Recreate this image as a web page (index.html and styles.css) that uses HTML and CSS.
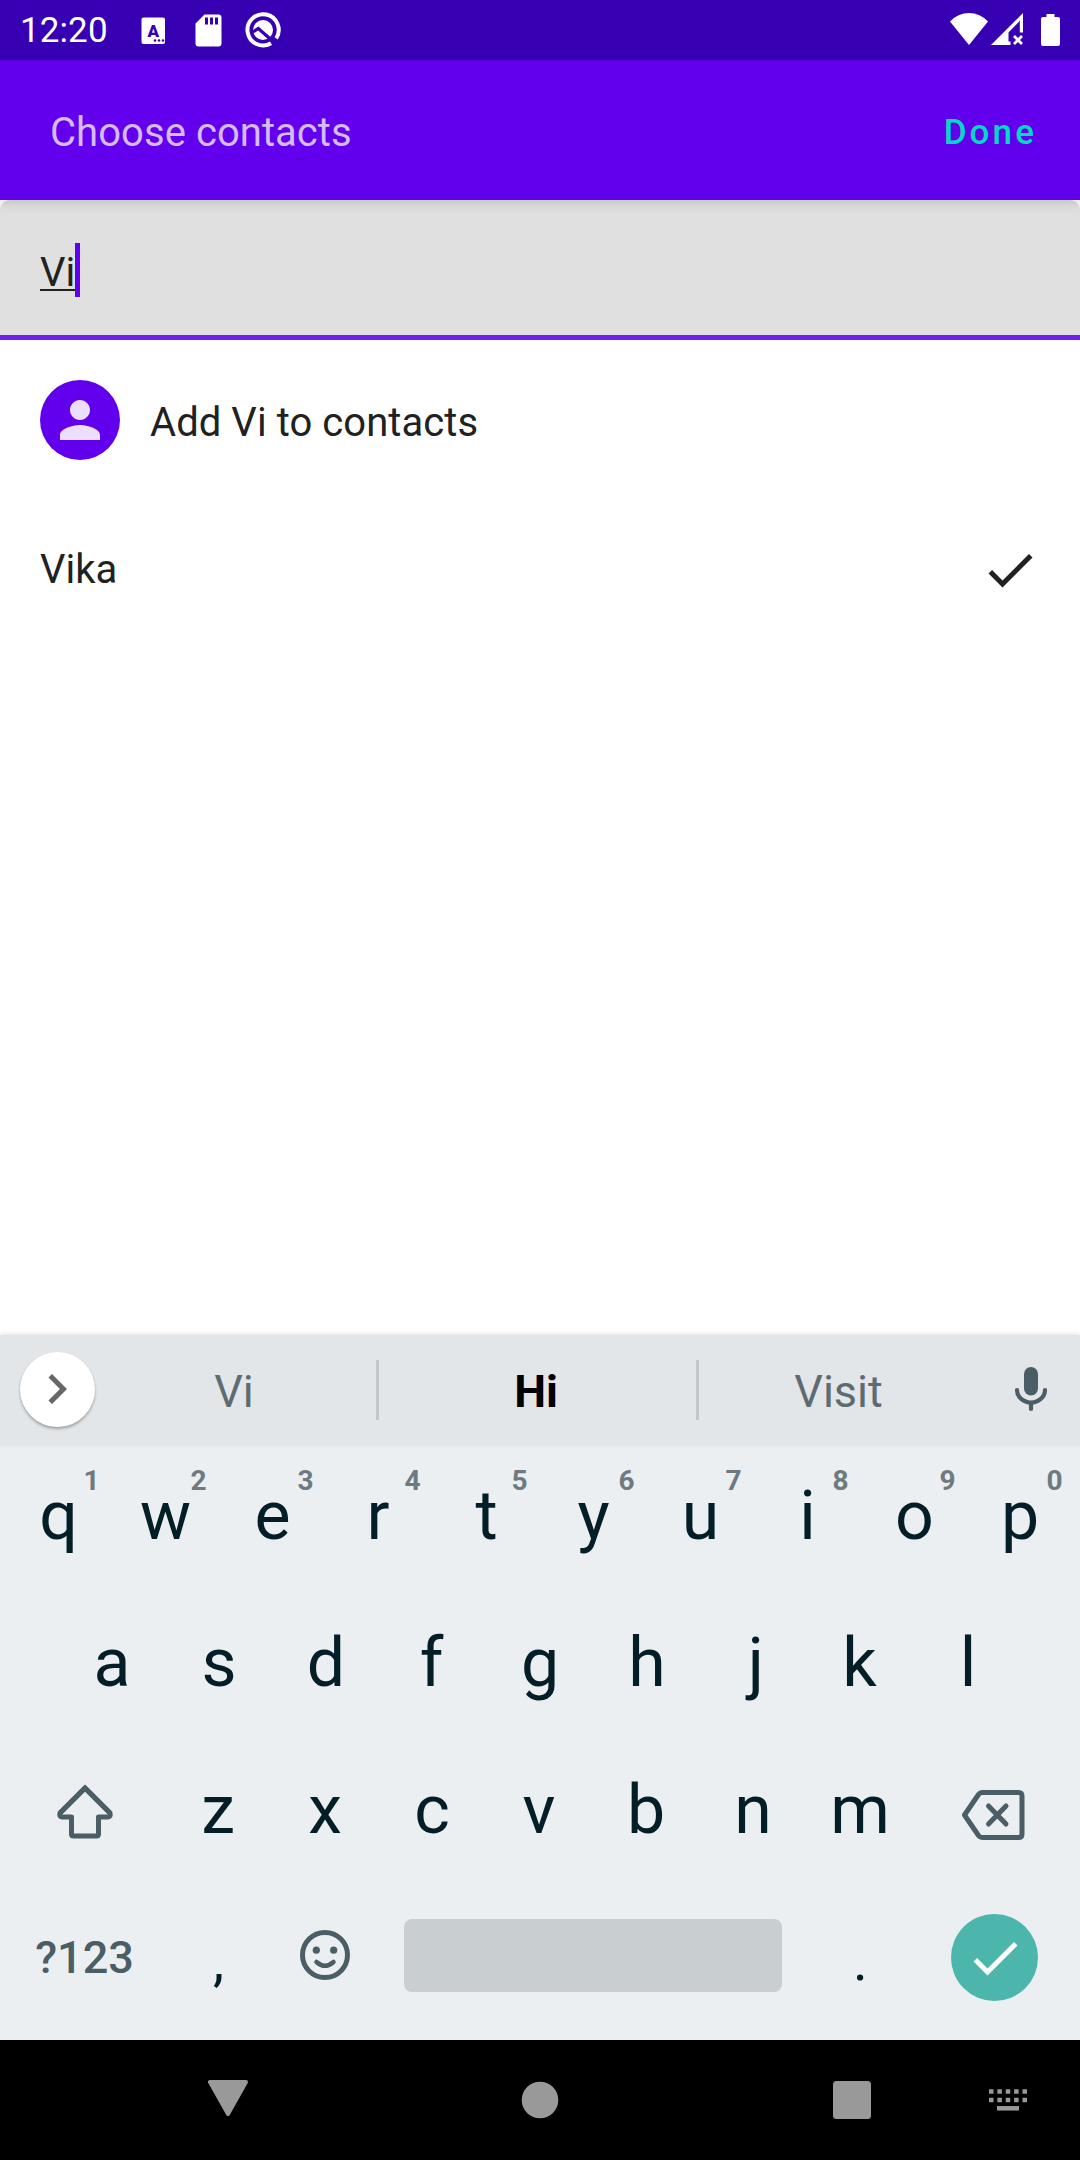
FILE: index.html
```html
<!DOCTYPE html>
<html lang="en">
<head>
<meta charset="utf-8">
<title>Choose contacts</title>
<link rel="stylesheet" href="styles.css">
</head>
<body>
<div class="screen">
  <div class="status">
    <span class="clock">12:20</span>
    <svg class="note-a" width="25" height="28" viewBox="0 0 25 28"><rect x=".5" y=".5" width="23.500" height="26.500" rx="2" fill="#fff"/><text x="12.300" y="19.500" text-anchor="middle" class="glyph-a">A</text><g fill="#3700b3"><circle cx="14" cy="23.500" r="1.300"/><circle cx="18" cy="23.500" r="1.300"/><circle cx="22" cy="23.500" r="1.300"/></g></svg>
    <svg class="note-sd" width="27" height="33" viewBox="0 0 27 33"><path d="M9.500.5H23.500a3 3 0 0 1 3 3V29.500a3 3 0 0 1-3 3H3.500a3 3 0 0 1-3-3V9.500z" fill="#fff"/><path d="M11.500 3.500v7M16.500 3.500v7M21.500 3.500v7" stroke="#3700b3" stroke-width="3"/></svg>
    <svg class="note-q" width="36" height="36" viewBox="0 0 36 36" fill="none"><path d="M26 31.300A15.600 15.600 0 1 1 31.200 26.300" stroke="#fff" stroke-width="4"/><circle cx="18" cy="18" r="10" fill="#fff"/><path d="M7 20.500L13.300 16.500L31 32" stroke="#3700b3" stroke-width="3.200"/></svg>
    <svg class="wifi" width="38" height="32" viewBox="0 0 38 32"><path d="M0 8.500A25.500 25.500 0 0 1 38 8.500L19 32z" fill="#fff"/></svg>
    <svg class="signal" width="32" height="32" viewBox="0 0 32 32"><path d="M32 0V19.500H28.800V8L17.500 19.500V28.500H19.500V32H0z" fill="#fff"/><path d="M23 23l8 8M31 23l-8 8" stroke="#fff" stroke-width="2.800"/></svg>
    <svg class="battery" width="19" height="32" viewBox="0 0 19 32"><path d="M5.500 0h8v3H17a2 2 0 0 1 2 2V30a2 2 0 0 1-2 2H2a2 2 0 0 1-2-2V5a2 2 0 0 1 2-2h3.500z" fill="#fff"/></svg>
  </div>
  <header class="appbar"><span class="title">Choose contacts</span><span class="done">Done</span></header>
  <div class="field-wrap"><div class="field"><span class="typed">Vi</span><span class="cursor"></span></div></div>
  <main class="list">
    <div class="row add">
      <svg width="80" height="80" viewBox="0 0 80 80"><circle cx="40" cy="40" r="40" fill="#6200ee"/><path transform="translate(10 10) scale(2.500)" fill="#ecdffd" d="M12 12c2.210 0 4-1.790 4-4s-1.790-4-4-4-4 1.790-4 4 1.790 4 4 4zm0 2c-2.670 0-8 1.340-8 4v2h16v-2c0-2.660-5.330-4-8-4z"/></svg>
      <span>Add Vi to contacts</span>
    </div>
    <div class="row contact"><span>Vika</span>
      <svg width="60" height="60" viewBox="0 0 24 24"><path fill="#212121" d="M9 16.170L4.830 12l-1.420 1.410L9 19 21 7l-1.410-1.410z"/></svg>
    </div>
  </main>
  <div class="suggest">
    <span class="expand"><svg width="60" height="60" viewBox="0 0 24 24"><path fill="#666" d="M10 6L8.590 7.410 13.170 12l-4.580 4.590L10 18l6-6z"/></svg></span>
    <span class="word side">Vi</span><i class="bar"></i><span class="word best">Hi</span><i class="bar"></i><span class="word side last">Visit</span>
    <svg class="mic" width="34" height="46" viewBox="0 0 34 46"><rect x="10" y="1" width="14" height="28.500" rx="7" fill="#4b5d65"/><path d="M3 24c0 7 6.500 12.500 14 12.500S31 31 31 24M17 37v6" fill="none" stroke="#4b5d65" stroke-width="4.200" stroke-linecap="round"/></svg>
  </div>
  <div class="keys">
    <div class="krow">
      <span class="key">q<sup>1</sup></span><span class="key">w<sup>2</sup></span><span class="key">e<sup>3</sup></span><span class="key nudge">r<sup>4</sup></span><span class="key">t<sup>5</sup></span><span class="key">y<sup>6</sup></span><span class="key">u<sup>7</sup></span><span class="key">i<sup>8</sup></span><span class="key">o<sup>9</sup></span><span class="key nudge">p<sup>0</sup></span>
    </div>
    <div class="krow">
      <span class="key">a</span><span class="key">s</span><span class="key">d</span><span class="key nudge">f</span><span class="key">g</span><span class="key">h</span><span class="key hook">j</span><span class="key nudge">k</span><span class="key">l</span>
    </div>
    <div class="krow lower">
      <span class="key wide"><svg class="shift" width="58" height="58" viewBox="0 0 58 58" fill="none" stroke="#4b5d65" stroke-width="5" stroke-linejoin="round"><path stroke-linejoin="miter" d="M4 30L29 5L54 30"/><path d="M29 5L54 30Q55 34 52 34H42.500V51Q42.500 53 40.500 53H17.500Q15.500 53 15.500 51V34H6Q3 34 4 30z"/></svg></span>
      <span class="key">z</span><span class="key">x</span><span class="key">c</span><span class="key">v</span><span class="key">b</span><span class="key">n</span><span class="key">m</span>
      <span class="key wide"><svg class="erase" width="64" height="52" viewBox="0 0 64 52" fill="none" stroke="#4b5d65" stroke-width="5"><path stroke-linejoin="round" d="M3.500 26L17.500 5.500Q19 3.500 21 3.500H57.500Q61 3.500 61 7V45Q61 48.500 57.500 48.500H21Q19 48.500 17.500 46.500z"/><path stroke-linecap="round" d="M27.500 17L45 35M45 17L27.500 35"/></svg></span>
    </div>
    <div class="krow lower">
      <span class="key wide symbols">?123</span>
      <span class="key punct">,</span>
      <span class="key"><svg class="emoji" width="50" height="50" viewBox="0 0 50 50" fill="none" stroke="#4b5d65"><circle cx="25" cy="25" r="22.500" stroke-width="5"/><path d="M16.500 32Q25 39.500 33.500 32" stroke-width="4.500" stroke-linecap="round"/><g fill="#4b5d65" stroke="none"><circle cx="16.300" cy="20.200" r="3.600"/><circle cx="33.700" cy="20.200" r="3.600"/></g></svg></span>
      <span class="space"></span>
      <span class="key punct">.</span>
      <span class="key wide"><span class="enter"><svg width="60" height="60" viewBox="0 0 24 24"><path fill="#fff" d="M9 16.170L4.830 12l-1.420 1.410L9 19 21 7l-1.410-1.410z"/></svg></span></span>
    </div>
  </div>
  <nav class="nav">
    <svg class="back" width="40" height="36" viewBox="0 0 40 36"><path d="M2 2H38L20 34z" fill="#999" stroke="#999" stroke-width="4" stroke-linejoin="round"/></svg>
    <svg class="home" width="38" height="38" viewBox="0 0 38 38"><circle cx="19" cy="19" r="18.300" fill="#999"/></svg>
    <svg class="recent" width="38" height="38" viewBox="0 0 38 38"><rect width="38" height="38" rx="3.500" fill="#999"/></svg>
    <svg class="ime" width="38" height="22" viewBox="0 0 38 22"><path d="M0 2.500H38M0 11H38" stroke="#999" stroke-width="4.500" stroke-dasharray="4.500 3.870"/><path d="M8 19.300H30" stroke="#999" stroke-width="4.500"/></svg>
  </nav>
</div>
</body>
</html>
```

FILE: styles.css
```css
* { box-sizing: border-box; }
body { margin: 0; background: #fff; font-family: Roboto, sans-serif; }
svg { display: block; flex: none; }
.screen { width: 1080px; height: 2160px; display: flex; flex-direction: column; overflow: hidden; }

.status { height: 60px; background: #3700b3; color: #fff; display: flex; align-items: flex-start; flex: none; }
.clock { width: 141px; padding-left: 20px; font-size: 35px; line-height: 62px; white-space: nowrap; letter-spacing: .1px; }
.glyph-a { font: 900 17px Roboto, sans-serif; fill: #3700b3; }
.note-a { margin-top: 17px; }
.note-sd { margin: 14px 0 0 29px; }
.note-q { margin: 12px 0 0 23px; }
.wifi { margin: 13px 0 0 auto; }
.signal { margin: 13px 0 0 3px; }
.battery { margin: 13.500px 20px 0 18px; }

.appbar { height: 140px; flex: none; background: #6200ee; padding: 4px 43px 0 50px; display: flex; align-items: center; justify-content: space-between; }
.title { font-size: 40px; color: #d6baf9; letter-spacing: .06px; }
.done { font-size: 35px; font-weight: 500; letter-spacing: 3.100px; color: #03dac5; }

.field-wrap { flex: none; height: 140px; background: #f0f0f0; }
.field { height: 140px; border-radius: 10px 10px 0 0; background: linear-gradient(#c8c8c8, #d8d8d8 6px, #e0e0e0 14px); border-bottom: 5px solid #731fec; padding: 43px 40px 0; display: flex; color: #212121; }
.typed { width: 35px; height: 48px; font-size: 40px; line-height: 60px; border-bottom: 2px solid #212121; white-space: nowrap; }
.cursor { width: 5px; height: 54px; background: #6200ee; }

.list { flex: 1; color: #212121; font-size: 40px; }
.row { display: flex; align-items: center; }
.add { height: 160px; padding-left: 40px; gap: 30px; }
.add span { padding-top: 4px; letter-spacing: .06px; }
.contact { height: 140px; padding: 0 40px; justify-content: space-between; }
.contact span { padding-bottom: 1px; }

.suggest { height: 110px; flex: none; background: #e2e6e9; display: flex; align-items: center; box-shadow: 0 -1px 5px rgba(0,0,0,.12); position: relative; }
.expand { width: 75px; height: 75px; margin: -2px 0 0 20px; border-radius: 50%; background: #fff; box-shadow: 0 2px 3px rgba(0,0,0,.3); display: flex; align-items: center; justify-content: center; }
.expand svg { margin-left: -2px; }
.word { font-size: 45px; text-align: center; padding-top: 2px; }
.side { width: 281px; color: #5e6c72; padding-right: 3px; }
.best { width: 317px; font-weight: 700; color: #000; padding-right: 3px; }
.last { width: 280px; padding-right: 1px; }
.bar { width: 3px; height: 60px; background: #c2c7ca; }
.mic { margin: -2px 0 0 35px; }

.keys { height: 595px; flex: none; background: #ebeff2; color: #041e28; }
.krow { display: flex; height: 147px; justify-content: center; }
.lower { padding-right: 2px; }
.key { width: 107px; height: 147px; flex: none; padding-bottom: 5px; display: flex; align-items: center; justify-content: center; font-size: 68px; position: relative; }
.key sup { position: absolute; left: 65px; top: 19px; width: 43px; text-align: center; font-size: 28px; line-height: 34px; font-weight: 700; color: #6e7a80; }
.nudge { padding-right: 3px; }
.hook { padding-left: 4px; }
.wide { width: 160px; padding-bottom: 0; }
.shift { margin-top: -1px; }
.erase { margin: 4px 0 0 -2px; }
.symbols { font-size: 45px; font-weight: 500; color: #4b5d65; padding-bottom: 5px; }
.punct { font-size: 56px; padding: 2px 0 0 1px; }
.emoji { margin-top: -4px; }
.space { width: 378px; height: 73px; flex: none; margin: 33px 25px 0; border-radius: 8px; background: #c9ced1; }
.enter { width: 87px; height: 87px; margin: -4px 0 0 2px; border-radius: 50%; background: #4db6ac; display: flex; align-items: center; justify-content: center; }

.nav { height: 120px; flex: none; background: #000; display: flex; align-items: flex-start; }
.back { margin: 40px 0 0 208px; }
.home { margin: 41px 0 0 273px; }
.recent { margin: 41px 0 0 274px; }
.ime { margin: 49px 0 0 118px; }
```
